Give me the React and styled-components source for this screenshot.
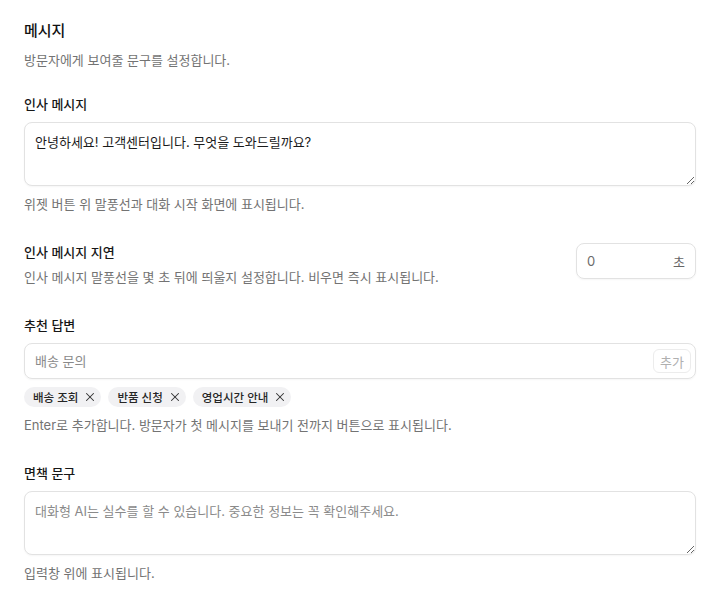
import styled, { createGlobalStyle } from "styled-components"
import { X } from "lucide-react"

const GlobalStyle = createGlobalStyle`
    * { box-sizing: border-box; }
    body {
        margin: 0;
        background: #fff;
        font-family: Inter, "Noto Sans CJK KR", sans-serif;
        color: #1a1a1a;
    }
`;

const Page = styled.div`
    padding: 19px 24px 24px;
    display: flex;
    flex-direction: column;
    gap: 29px;
`;

const Header = styled.header`
    display: flex;
    flex-direction: column;
    gap: 8px;
    margin-bottom: -4px;
`;

const Title = styled.h1`
    margin: 0;
    font-size: 15px;
    line-height: 24px;
    font-weight: 500;
    color: #111;
`;

const Description = styled.p`
    margin: 0;
    font-size: 13px;
    line-height: 18px;
    color: #737373;
`;

const Field = styled.section`
    display: flex;
    flex-direction: column;
    gap: 8px;
`;

const InlineField = styled.section`
    display: flex;
    justify-content: space-between;
    align-items: flex-start;
    gap: 16px;
`;

const FieldText = styled.div`
    display: flex;
    flex-direction: column;
    gap: 6px;
`;

const Label = styled.label`
    font-size: 13px;
    line-height: 20px;
    font-weight: 500;
    color: #171717;
`;

const Hint = styled.p`
    margin: ${props => props.$tight ? "0" : "1px 0 0"};
    font-size: 13px;
    line-height: 18px;
    color: #737373;
`;

const TextArea = styled.textarea`
    display: block;
    width: 100%;
    height: 64px;
    padding: 9px 10px;
    border: 1px solid #e2e2e2;
    border-radius: 8px;
    font: inherit;
    font-size: 13px;
    line-height: 20px;
    color: #1a1a1a;
    resize: vertical;
    outline: none;
    box-shadow: 0 1px 2px rgba(0, 0, 0, 0.04);

    &::placeholder {
        color: #8a8a8a;
    }
`;

const DelayBox = styled.div`
    width: 120px;
    height: 36px;
    margin-top: 1px;
    flex-shrink: 0;
    display: flex;
    align-items: center;
    padding: 0 10px;
    border: 1px solid #e2e2e2;
    border-radius: 8px;
    box-shadow: 0 1px 2px rgba(0, 0, 0, 0.04);
`;

const DelayInput = styled.input`
    flex: 1;
    min-width: 0;
    border: none;
    outline: none;
    padding: 0;
    font: inherit;
    font-size: 13px;
    color: #6b6b6b;
    background: transparent;
`;

const Unit = styled.span`
    font-size: 13px;
    color: #666;
`;

const ReplyBox = styled.div`
    height: 36px;
    display: flex;
    align-items: center;
    padding: 0 4px 0 10px;
    border: 1px solid #e2e2e2;
    border-radius: 8px;
    box-shadow: 0 1px 2px rgba(0, 0, 0, 0.04);
`;

const ReplyInput = styled.input`
    flex: 1;
    min-width: 0;
    border: none;
    outline: none;
    padding: 0;
    font: inherit;
    font-size: 13px;
    color: #1a1a1a;
    background: transparent;

    &::placeholder {
        color: #8a8a8a;
    }
`;

const AddButton = styled.button`
    height: 24px;
    padding: 0 6px;
    border: 1px solid #ececec;
    border-radius: 6px;
    background: #fff;
    font: inherit;
    font-size: 13px;
    color: #b0b0b0;
    cursor: not-allowed;
`;

const ChipRow = styled.div`
    display: flex;
    flex-wrap: wrap;
    gap: 7px;
`;

const Chip = styled.span`
    display: inline-flex;
    align-items: center;
    gap: 5px;
    height: 20px;
    padding: 0 4px 0 9px;
    border-radius: 999px;
    background: #f1f1f3;
    font-size: 11.5px;
    font-weight: 500;
    color: #262626;

    svg {
        color: #333;
    }
`;

const chips = ["배송 조회", "반품 신청", "영업시간 안내"];

export default function App() {
    return (
        <>
            <GlobalStyle />
            <Page>
                <Header>
                    <Title>메시지</Title>
                    <Description>방문자에게 보여줄 문구를 설정합니다.</Description>
                </Header>

                <Field>
                    <Label>인사 메시지</Label>
                    <TextArea defaultValue="안녕하세요! 고객센터입니다. 무엇을 도와드릴까요?" />
                    <Hint>위젯 버튼 위 말풍선과 대화 시작 화면에 표시됩니다.</Hint>
                </Field>

                <InlineField>
                    <FieldText>
                        <Label>인사 메시지 지연</Label>
                        <Hint $tight>인사 메시지 말풍선을 몇 초 뒤에 띄울지 설정합니다. 비우면 즉시 표시됩니다.</Hint>
                    </FieldText>
                    <DelayBox>
                        <DelayInput defaultValue="0" />
                        <Unit>초</Unit>
                    </DelayBox>
                </InlineField>

                <Field>
                    <Label>추천 답변</Label>
                    <ReplyBox>
                        <ReplyInput placeholder="배송 문의" />
                        <AddButton disabled>추가</AddButton>
                    </ReplyBox>
                    <ChipRow>
                        {chips.map(chip => (
                            <Chip key={chip}>
                                {chip}
                                <X size={14} strokeWidth={1.8} />
                            </Chip>
                        ))}
                    </ChipRow>
                    <Hint>Enter로 추가합니다. 방문자가 첫 메시지를 보내기 전까지 버튼으로 표시됩니다.</Hint>
                </Field>

                <Field>
                    <Label>면책 문구</Label>
                    <TextArea placeholder="대화형 AI는 실수를 할 수 있습니다. 중요한 정보는 꼭 확인해주세요." />
                    <Hint>입력창 위에 표시됩니다.</Hint>
                </Field>
            </Page>
        </>
    )
}
